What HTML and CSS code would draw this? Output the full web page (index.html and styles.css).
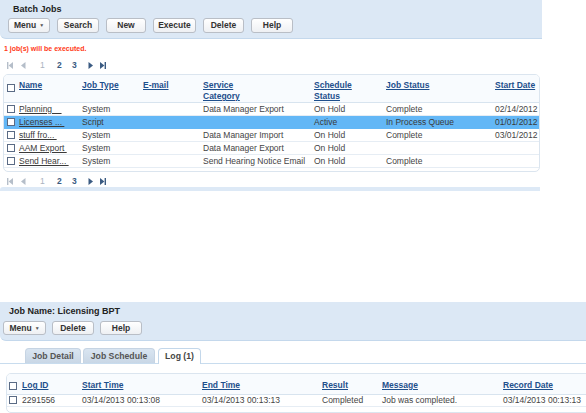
FILE: index.html
```html
<!DOCTYPE html>
<html>
<head>
<meta charset="utf-8">
<link rel="stylesheet" href="styles.css">
</head>
<body>
<div class="top">
  <div class="panel">
    <div class="panel-title">Batch Jobs</div>
    <div class="btns">
      <span class="btn w42">Menu <span class="caret">&#9660;</span></span>
      <span class="btn w42">Search</span>
      <span class="btn w40">New</span>
      <span class="btn w43">Execute</span>
      <span class="btn w41">Delete</span>
      <span class="btn w42">Help</span>
    </div>
  </div>
  <div class="msg">1 job(s) will be executed.</div>
  <div class="pager">
    <span class="pi p-first off"><svg width="6" height="7" viewBox="0 0 6 7"><rect x="0" y="0" width="1.4" height="7"/><polygon points="6,0 6,7 1.6,3.5"/></svg></span>
    <span class="pi p-prev off"><svg width="5" height="7" viewBox="0 0 5 7"><polygon points="4.5,0 4.5,7 0,3.5"/></svg></span>
    <span class="pn n1">1</span>
    <span class="pn n2">2</span>
    <span class="pn n3">3</span>
    <span class="pi p-next"><svg width="5" height="7" viewBox="0 0 5 7"><polygon points="0.5,0 0.5,7 5,3.5"/></svg></span>
    <span class="pi p-last"><svg width="6" height="7" viewBox="0 0 6 7"><polygon points="0,0 0,7 4.4,3.5"/><rect x="4.6" y="0" width="1.4" height="7"/></svg></span>
  </div>
  <div class="grid">
    <table class="jobs">
      <colgroup>
        <col class="c-chk"><col class="c-name"><col class="c-type"><col class="c-mail"><col class="c-svc"><col class="c-sch"><col class="c-stat"><col class="c-date">
      </colgroup>
      <thead>
        <tr>
          <th><span class="cb hcb"></span></th>
          <th><a>Name</a></th>
          <th><a>Job Type</a></th>
          <th><a>E-mail</a></th>
          <th><a>Service<br>Category</a></th>
          <th><a>Schedule<br>Status</a></th>
          <th><a>Job Status</a></th>
          <th><a>Start Date</a></th>
        </tr>
      </thead>
      <tbody>
        <tr><td><span class="cb"></span></td><td><a class="nm">Planning&nbsp;&nbsp;&nbsp;&nbsp;</a></td><td>System</td><td></td><td>Data Manager Export</td><td>On Hold</td><td>Complete</td><td>02/14/2012</td></tr>
        <tr class="sel"><td><span class="cb"></span></td><td><a class="nm">Licenses ...&nbsp;</a></td><td>Script</td><td></td><td></td><td>Active</td><td>In Process Queue</td><td>01/01/2012</td></tr>
        <tr><td><span class="cb"></span></td><td><a class="nm">stuff fro...&nbsp;</a></td><td>System</td><td></td><td>Data Manager Import</td><td>On Hold</td><td>Complete</td><td>03/01/2012</td></tr>
        <tr><td><span class="cb"></span></td><td><a class="nm">AAM Export&nbsp;</a></td><td>System</td><td></td><td>Data Manager Export</td><td>On Hold</td><td></td><td></td></tr>
        <tr><td><span class="cb"></span></td><td><a class="nm">Send Hear...&nbsp;</a></td><td>System</td><td></td><td>Send Hearing Notice Email</td><td>On Hold</td><td>Complete</td><td></td></tr>
      </tbody>
    </table>
  </div>
  <div class="pager pager2">
    <span class="pi p-first off"><svg width="6" height="7" viewBox="0 0 6 7"><rect x="0" y="0" width="1.4" height="7"/><polygon points="6,0 6,7 1.6,3.5"/></svg></span>
    <span class="pi p-prev off"><svg width="5" height="7" viewBox="0 0 5 7"><polygon points="4.5,0 4.5,7 0,3.5"/></svg></span>
    <span class="pn n1">1</span>
    <span class="pn n2">2</span>
    <span class="pn n3">3</span>
    <span class="pi p-next"><svg width="5" height="7" viewBox="0 0 5 7"><polygon points="0.5,0 0.5,7 5,3.5"/></svg></span>
    <span class="pi p-last"><svg width="6" height="7" viewBox="0 0 6 7"><polygon points="0,0 0,7 4.4,3.5"/><rect x="4.6" y="0" width="1.4" height="7"/></svg></span>
  </div>
  <div class="band"></div>
</div>

<div class="detail">
  <div class="panel panel2">
    <div class="panel-title">Job Name: Licensing BPT</div>
    <div class="btns btns2">
      <span class="btn w43">Menu <span class="caret">&#9660;</span></span>
      <span class="btn w42">Delete</span>
      <span class="btn w42">Help</span>
    </div>
  </div>
  <div class="tabs">
    <span class="tab t1">Job Detail</span>
    <span class="tab t2">Job Schedule</span>
    <span class="tab t3 active">Log (1)</span>
  </div>
  <div class="grid loggrid">
    <table class="log">
      <colgroup>
        <col class="l-chk"><col class="l-id"><col class="l-st"><col class="l-et"><col class="l-res"><col class="l-msg"><col class="l-rec">
      </colgroup>
      <thead>
        <tr>
          <th><span class="cb"></span></th>
          <th><a>Log ID</a></th>
          <th><a>Start Time</a></th>
          <th><a>End Time</a></th>
          <th><a>Result</a></th>
          <th><a>Message</a></th>
          <th><a>Record Date</a></th>
        </tr>
      </thead>
      <tbody>
        <tr><td><span class="cb"></span></td><td>2291556</td><td>03/14/2013 00:13:08</td><td>03/14/2013 00:13:13</td><td>Completed</td><td>Job was completed.</td><td>03/14/2013 00:13:13</td></tr>
      </tbody>
    </table>
  </div>
</div>
</body>
</html>
```

FILE: styles.css
```css
* { box-sizing: border-box; }
body {
  margin: 0;
  font-family: "Liberation Sans", Arial, sans-serif;
  color: #444;
  background: #fff;
  width: 586px;
  height: 413px;
  overflow: hidden;
}
.top { width: 542px; }
.panel {
  background: #dce8f5;
  border-bottom: 1px solid #c4d8ec;
  border-bottom-left-radius: 6px;
  height: 39px;
  padding-left: 8px;
}
.panel-title {
  font-weight: bold;
  font-size: 9px;
  line-height: 12px;
  padding-top: 3px;
  padding-left: 5px;
  color: #222;
}
.btns { display: flex; gap: 7px; margin-top: 3px; }
.btn {
  height: 15px;
  border: 1px solid #b9bec6;
  border-radius: 3px;
  background: linear-gradient(#ffffff, #eef0f3);
  font-weight: bold;
  font-size: 8.5px;
  line-height: 13px;
  text-align: center;
  color: #333;
  display: flex;
  align-items: center;
  justify-content: center;
  gap: 3px;
}
.caret { font-size: 5px; color: #555; }
.w40 { width: 40px; } .w41 { width: 41px; } .w42 { width: 42px; } .w43 { width: 43px; }
.msg {
  margin-top: 5px;
  padding-left: 4px;
  color: #ff3a17;
  font-weight: bold;
  font-size: 7px;
  line-height: 10px;
}
.pager {
  margin-top: 6px;
  height: 10px;
  display: flex;
  align-items: center;
  font-size: 8.5px;
  font-weight: bold;
}
.pi { display: flex; align-items: center; }
.pi svg { fill: #3b5b82; display: block; }
.pi.off svg { fill: #b5bec9; }
.p-first { margin-left: 7px; }
.p-prev { margin-left: 8px; }
.pn { color: #3b5b82; width: 5px; }
.n1 { margin-left: 14px; color: #aab3be; font-weight: normal; }
.n2 { margin-left: 12px; }
.n3 { margin-left: 10px; }
.p-next { margin-left: 11px; }
.p-last { margin-left: 7px; }

.grid {
  margin-top: 4px;
  margin-left: 3px;
  width: 537px;
  height: 98px;
  border: 1px solid #dbe5ef;
  border-radius: 5px;
  overflow: hidden;
}
table { border-collapse: collapse; table-layout: fixed; }
.jobs { width: 535px; }
.c-chk { width: 15px; } .c-name { width: 63px; } .c-type { width: 61px; } .c-mail { width: 60px; }
.c-svc { width: 111px; } .c-sch { width: 72px; } .c-stat { width: 109px; } .c-date { width: 44px; }
th {
  text-align: left;
  vertical-align: top;
  padding: 5px 0 0 0;
  font-size: 8.5px;
  line-height: 11px;
  height: 27px;
  background: #f8fbfe;
  border-bottom: 1px solid #d8e4ef;
}
th a { color: #1e4f8c; text-decoration: underline; font-weight: bold; }
td {
  padding: 0;
  font-size: 8.5px;
  line-height: 12px;
  height: 12.6px;
  white-space: nowrap;
  border-bottom: 1px solid #e6edf4;
  color: #444;
}
tr.sel td { background: #63b7f6; border-bottom-color: #63b7f6; color: #3a3a3a; }
a.nm { color: #3a3a3a; text-decoration: underline; }
.cb {
  display: block;
  width: 8px;
  height: 8px;
  border: 1px solid #5a6b85;
  background: #fff;
  margin-left: 3px;
}
.hcb { margin-top: 4px; }

.pager2 { margin-top: 4px; }
.band {
  margin-top: 1px;
  height: 4px;
  width: 540px;
  background: #dde9f6;
  border-top-left-radius: 3px;
}

.detail { margin-top: 111px; width: 586px; }
.panel2 { height: 39px; padding-left: 3px; border-bottom-left-radius: 6px; }
.panel2 .panel-title { padding-left: 6px; padding-top: 3px; }
.btns2 { gap: 6px; margin-top: 4px; }
.btns2 .btn { height: 14px; line-height: 12px; }

.tabs {
  margin-top: 7px;
  height: 16px;
  border-bottom: 1px solid #c8dcee;
  display: flex;
  align-items: flex-end;
  padding-left: 25px;
}
.tab {
  height: 15px;
  font-size: 8.7px;
  font-weight: bold;
  color: #555;
  line-height: 14px;
  text-align: center;
  border-radius: 4px 4px 0 0;
  background: linear-gradient(#d9e5f1, #c9d7e6);
  border: 1px solid #c6d4e3;
  border-bottom: none;
}
.t1 { width: 56px; }
.t2 { width: 72px; margin-left: 2px; }
.t3 { width: 43px; margin-left: 3px; }
.tab.active {
  background: #fff;
  border-color: #c3d7ea;
  height: 16px;
  margin-bottom: -1px;
  color: #444;
}

.loggrid {
  margin-top: 9px;
  margin-left: 6px;
  width: 600px;
  height: 40px;
}
.log { width: 600px; }
.l-chk { width: 15px; } .l-id { width: 60px; } .l-st { width: 120px; } .l-et { width: 120px; }
.l-res { width: 60px; } .l-msg { width: 121px; } .l-rec { width: 104px; }
.log th { height: 20px; padding-top: 6px; }
.log th .cb { margin-left: 2px; margin-top: 2px; }
.log td { font-size: 8.5px; height: 11.5px; line-height: 11px; }
.log td .cb { margin-left: 2px; }
```
